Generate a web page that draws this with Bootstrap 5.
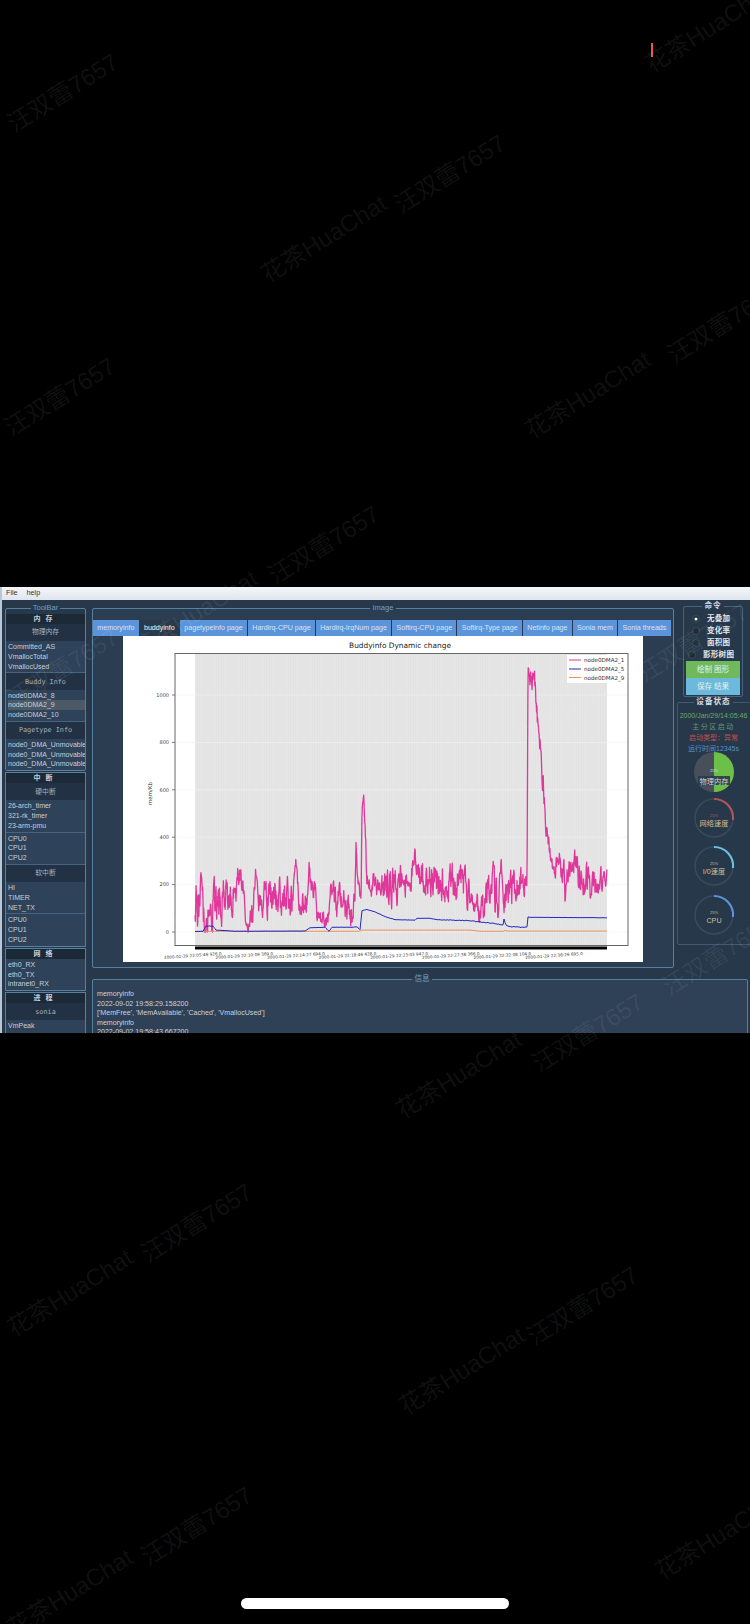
<!DOCTYPE html>
<html lang="zh-CN">
<head>
  <meta charset="UTF-8" />
  <title>ToolBar monitor</title>
  <link href="https://cdn.jsdelivr.net/npm/bootstrap@5.3.3/dist/css/bootstrap.min.css" rel="stylesheet">
  <style>
    html, body { background: #000; height: 1624px; overflow: hidden; }
    body { position: relative; font-family: "Liberation Sans", "Noto Sans CJK SC", sans-serif; font-size: 7px; }
    .red-tick { width: 2px; height: 14px; margin: 43px 0 0 651px; background: #e8574f; }
    .phone-bar { width: 268px; height: 11px; margin: 565px 0 0 241px; background: #fff; border-radius: 6px; }

    .app-win { height: 446px; margin-top: 530px; overflow: hidden; background: #26384a; border-left: 2px solid #b9c6d6; color: #c5d0db; }
    .menu-strip { height: 13px; flex: none; padding-left: 4px; gap: 9px; align-items: center; background: linear-gradient(#f4f6fb, #dfe5ee); color: #333; font-size: 7.2px; }

    .gbox { min-width: 0; border: 1px solid #55809f; border-radius: 2px; padding: 0; }
    .gbox > legend { float: none; width: auto; margin: 0 auto; padding: 0 2px; font-size: 7.6px; line-height: 8px; color: #6f9fc4; }

    .left-col { width: 81px; margin-left: 3px; flex: none; }
    .tool-box { margin-top: 4px; }
    .tool-box .band-row:first-of-type { margin-top: 2px; }
    .sect-box { border: 1px solid #55809f; margin-top: 1px; }
    .band-row { background: #1c2a38; color: #c9d0d7; font-weight: 700; text-align: center; letter-spacing: 5px; font-size: 7px; line-height: 10px; height: 10px; }
    .head-row { background: #223244; color: #a5b1bd; text-align: center; font-family: "DejaVu Sans Mono", "Noto Sans CJK SC", monospace; font-size: 6.8px; display: flex; align-items: center; justify-content: center; height: 17px; }
    .item-list { background: #2e4259; padding: 1px 0 1px 2px; border-bottom: 1px solid #46647f; border-radius: 0; }
    .item-list:last-child { border-bottom: 0; }
    .item-list .list-group-item { background: transparent; border: 0; padding: 0; line-height: 9.8px; font-size: 7px; color: #c5d0db; white-space: nowrap; overflow: hidden; }
    .item-list .list-group-item.active { background: #4c5967; color: #c5d0db; }

    .main-col { margin-left: 6px; min-width: 0; flex: 1; }
    .img-box { width: 582px; flex: none; margin-top: 4px; background: #2a3d51; }
    .tab-row { height: 16px; margin: 8px 2px 0 0; flex-wrap: nowrap; background: #26384a; }
    .tab-row .nav-link { height: 16px; padding: 0 4.3px; margin-right: 1px; background: #5b94da; color: #d8e6f6; font-size: 7.1px; line-height: 16px; white-space: nowrap; border-radius: 0; }
    .tab-row .nav-link.active { background: #283a4c; color: #f2f4f6; }
    .chart-wrap { width: 520px; height: 326px; margin: 0 auto 5px; background: #fff; }
    .chart-wrap svg { display: block; }

    .right-col { width: 73px; margin-left: 3px; flex: none; }
    .cmd-box { margin: 2px 7px 0 6px; border-color: #46647f; }
    .cmd-box > legend, .state-box > legend { color: #d6dce2; font-weight: 700; letter-spacing: 1px; }
    .radio-list { padding-top: 3px; }
    .radio-item { height: 12px; min-height: 12px; margin: 0; padding: 0 0 0 8px; color: #e4e8ec; font-weight: 700; font-size: 7.5px; letter-spacing: .3px; }
    .radio-item.wide { padding-left: 4px; }
    .radio-item label { margin-left: 7px; }
    .radio-item .form-check-input { float: none; flex: none; width: 8px; height: 8px; margin: 0; background-color: #1e2b38; border-color: #3d4c5b; }
    .radio-item .form-check-input:checked { background-color: #1e2b38; border-color: #3d4c5b; }
    .act-btn { display: block; width: 54px; height: 17px; margin: 0 auto; padding: 0; border: 0; border-radius: 0; font-size: 7.5px; line-height: 17px; color: #e8f0e8; }
    .act-btn.is-draw { background: #6fb95c; }
    .act-btn.is-save { background: #6bb9dc; margin-bottom: 1px; }
    .state-box { margin: 1px -4px 0 0; padding-right: 4px; border-color: #3e5a74; }
    .state-lines { padding-top: 4px; text-align: center; }
    .state-lines div { line-height: 11px; font-size: 7px; white-space: nowrap; }
    .c-green { color: #6aa86a; }
    .c-dim { color: #5f9a78; letter-spacing: 1.5px; }
    .c-red { color: #c2504e; }
    .c-blue { color: #5b8fc4; }
    .gauge-col { padding-bottom: 6px; }
    .gauge-col svg { display: block; margin: 0 auto; }
    .gauge-col svg + svg { margin-top: 2.3px; }
    .gauge-col .first-g { margin-top: -2px; margin-bottom: 3px; }

    .msg-box { margin: 7px 2px 0 0; padding: 7px 0 0 4px; background: #2e4157; }
    .msg-box > legend { color: #6f9fc4; }
    .msg-box p { margin: 0; line-height: 9.5px; font-size: 7.1px; color: #c8d2dc; white-space: nowrap; }

    .wm-layer { position: absolute; inset: 0; overflow: hidden; pointer-events: none; }
    .wm-text { position: absolute; transform: translate(-50%, -50%) rotate(-32deg); font-family: "Liberation Sans", "Noto Sans CJK SC", sans-serif; font-size: 24px; color: rgba(255,255,255,.07); white-space: nowrap; }
  </style>
</head>
<body>
  <div class="red-tick"></div>

  <div class="app-win d-flex flex-column">
    <div class="menu-strip d-flex"><span>File</span><span>help</span></div>

    <div class="d-flex flex-grow-1">
      <!-- ToolBar -->
      <div class="left-col">
        <fieldset class="gbox tool-box">
          <legend>ToolBar</legend>
          <div class="band-row">内存</div>
          <div class="head-row">物理内存</div>
          <ul class="list-group item-list">
            <li class="list-group-item">Committed_AS</li>
            <li class="list-group-item">VmallocTotal</li>
            <li class="list-group-item">VmallocUsed</li>
          </ul>
          <div class="head-row">Buddy Info</div>
          <ul class="list-group item-list">
            <li class="list-group-item">node0DMA2_8</li>
            <li class="list-group-item active">node0DMA2_9</li>
            <li class="list-group-item">node0DMA2_10</li>
          </ul>
          <div class="head-row">Pagetype Info</div>
          <ul class="list-group item-list">
            <li class="list-group-item">node0_DMA_Unmovable</li>
            <li class="list-group-item">node0_DMA_Unmovable</li>
            <li class="list-group-item">node0_DMA_Unmovable</li>
          </ul>
        </fieldset>
        <div class="sect-box">
          <div class="band-row">中断</div>
          <div class="head-row">硬中断</div>
          <ul class="list-group item-list">
            <li class="list-group-item">26-arch_timer</li>
            <li class="list-group-item">321-rk_timer</li>
            <li class="list-group-item">23-arm-pmu</li>
          </ul>
          <ul class="list-group item-list">
            <li class="list-group-item">CPU0</li>
            <li class="list-group-item">CPU1</li>
            <li class="list-group-item">CPU2</li>
          </ul>
          <div class="head-row">软中断</div>
          <ul class="list-group item-list">
            <li class="list-group-item">HI</li>
            <li class="list-group-item">TIMER</li>
            <li class="list-group-item">NET_TX</li>
          </ul>
          <ul class="list-group item-list">
            <li class="list-group-item">CPU0</li>
            <li class="list-group-item">CPU1</li>
            <li class="list-group-item">CPU2</li>
          </ul>
        </div>
        <div class="sect-box">
          <div class="band-row">网络</div>
          <ul class="list-group item-list">
            <li class="list-group-item">eth0_RX</li>
            <li class="list-group-item">eth0_TX</li>
            <li class="list-group-item">intranet0_RX</li>
          </ul>
        </div>
        <div class="sect-box">
          <div class="band-row">进程</div>
          <div class="head-row">sonia</div>
          <ul class="list-group item-list">
            <li class="list-group-item">VmPeak</li>
            <li class="list-group-item">VmSize</li>
          </ul>
        </div>
      </div>

      <div class="main-col d-flex flex-column">
        <div class="d-flex">
          <!-- Image -->
          <fieldset class="gbox img-box">
            <legend>Image</legend>
            <ul class="nav tab-row">
              <li class="nav-item"><a class="nav-link" href="#">memoryinfo</a></li>
              <li class="nav-item"><a class="nav-link active" href="#">buddyinfo</a></li>
              <li class="nav-item"><a class="nav-link" href="#">pagetypeinfo page</a></li>
              <li class="nav-item"><a class="nav-link" href="#">Hardirq-CPU page</a></li>
              <li class="nav-item"><a class="nav-link" href="#">Hardirq-IrqNum page</a></li>
              <li class="nav-item"><a class="nav-link" href="#">Softirq-CPU page</a></li>
              <li class="nav-item"><a class="nav-link" href="#">Softirq-Type page</a></li>
              <li class="nav-item"><a class="nav-link" href="#">Netinfo page</a></li>
              <li class="nav-item"><a class="nav-link" href="#">Sonia mem</a></li>
              <li class="nav-item"><a class="nav-link" href="#">Sonia threads</a></li>
            </ul>
            <div class="chart-wrap">
              <svg id="chart" width="520" height="326" viewBox="123 636 520 326" font-family="DejaVu Sans, sans-serif">
                <defs>
                  <pattern id="stripes" width="2.4" height="4" patternUnits="userSpaceOnUse">
                    <rect width="2.4" height="4" fill="#e6e6e6"/>
                    <rect width="0.8" height="4" fill="#e1e1e1"/>
                  </pattern>
                </defs>
                <text x="400" y="648" text-anchor="middle" font-size="7.4" fill="#222">Buddyinfo Dynamic change</text>
                <rect x="195" y="654" width="412" height="291" fill="url(#stripes)"/>
                <g id="grid-y"></g>
                <path id="line-pink" fill="none" stroke="#e0379a" stroke-width="1.3" stroke-linejoin="round"/>
                <path id="line-orange" fill="none" stroke="#e8935f" stroke-width="1"/>
                <path id="line-blue" fill="none" stroke="#2626c4" stroke-width="1"/>
                <rect x="175" y="653.5" width="453" height="292" fill="none" stroke="#666" stroke-width="1"/>
                <rect x="195" y="946.5" width="412" height="3" fill="#000"/>
                <text transform="translate(152 805) rotate(-90)" font-size="5.5" fill="#333">mem/Kb</text>
                <g id="ticks-x" font-size="4.2" fill="#444"></g>
                <g>
                  <rect x="567" y="655" width="58" height="28" fill="#fff" opacity=".9"/>
                  <line x1="569" x2="581" y1="660" y2="660" stroke="#e0379a"/>
                  <line x1="569" x2="581" y1="669" y2="669" stroke="#2626c4"/>
                  <line x1="569" x2="581" y1="677.5" y2="677.5" stroke="#e8935f"/>
                  <g font-size="5.6" fill="#333">
                    <text x="584" y="662">node0DMA2_1</text>
                    <text x="584" y="671">node0DMA2_5</text>
                    <text x="584" y="679.5">node0DMA2_9</text>
                  </g>
                </g>
              </svg>
            </div>
          </fieldset>

          <div class="right-col">
            <fieldset class="gbox cmd-box">
              <legend>命令</legend>
              <div class="radio-list">
                <div class="form-check radio-item d-flex align-items-center"><input class="form-check-input" type="radio" name="mode" checked><label>无叠加</label></div>
                <div class="form-check radio-item d-flex align-items-center"><input class="form-check-input" type="radio" name="mode"><label>变化率</label></div>
                <div class="form-check radio-item d-flex align-items-center"><input class="form-check-input" type="radio" name="mode"><label>面积图</label></div>
                <div class="form-check radio-item wide d-flex align-items-center"><input class="form-check-input" type="radio" name="mode"><label>影形树图</label></div>
              </div>
              <button class="btn act-btn is-draw">绘制 图形</button>
              <button class="btn act-btn is-save">保存 结果</button>
            </fieldset>

            <fieldset class="gbox state-box">
              <legend>设备状态</legend>
              <div class="state-lines">
                <div class="c-green">2000/Jan/29/14:05:46</div>
                <div class="c-dim">主分区启动</div>
                <div class="c-red">启动类型：异常</div>
                <div class="c-blue">运行时间12345s</div>
              </div>
              <div class="gauge-col">
                <svg class="first-g" width="44" height="40" viewBox="0 0 44 40">
                  <circle cx="22" cy="20" r="20" fill="#474f5a"/>
                  <path d="M22 0 A20 20 0 0 1 22 40 Z" fill="#6cc04a"/>
                  <text x="22" y="20" text-anchor="middle" font-size="4" fill="#d8dde2">25%</text>
                  <rect x="6" y="24" width="32" height="9" fill="#2a3a4a" opacity=".9"/>
                  <text x="22" y="31.5" text-anchor="middle" font-size="7.2" fill="#d0d6dc">物理内存</text>
                </svg>
                <svg width="44" height="46" viewBox="0 0 44 46">
                  <circle cx="22" cy="23" r="19" fill="none" stroke="#3b4a5a" stroke-width="1.6"/>
                  <path d="M22 4 A19 19 0 0 1 41 25" fill="none" stroke="#b5545c" stroke-width="2"/>
                  <text x="22" y="22" text-anchor="middle" font-size="4" fill="#c2504e">25%</text>
                  <text x="22" y="31" text-anchor="middle" font-size="7.2" fill="#d6bd94">网络速度</text>
                </svg>
                <svg width="44" height="46" viewBox="0 0 44 46">
                  <circle cx="22" cy="23" r="19" fill="none" stroke="#3b4a5a" stroke-width="1.6"/>
                  <path d="M22 4 A19 19 0 0 1 41 25" fill="none" stroke="#6cc0dc" stroke-width="2"/>
                  <text x="22" y="22" text-anchor="middle" font-size="4" fill="#d6bd94">25%</text>
                  <text x="22" y="31" text-anchor="middle" font-size="7.2" fill="#d6bd94">I/0速度</text>
                </svg>
                <svg width="44" height="46" viewBox="0 0 44 46">
                  <circle cx="22" cy="23" r="19" fill="none" stroke="#3b4a5a" stroke-width="1.6"/>
                  <path d="M22 4 A19 19 0 0 1 41 25" fill="none" stroke="#5b94da" stroke-width="2"/>
                  <text x="22" y="22" text-anchor="middle" font-size="4" fill="#d6bd94">25%</text>
                  <text x="22" y="31" text-anchor="middle" font-size="7.2" fill="#d6bd94">CPU</text>
                </svg>
              </div>
            </fieldset>
          </div>
        </div>

        <fieldset class="gbox msg-box">
          <legend>信息</legend>
          <p>memoryinfo</p>
          <p>2022-09-02 19:58:29.158200</p>
          <p>['MemFree', 'MemAvailable', 'Cached', 'VmallocUsed']</p>
          <p>memoryinfo</p>
          <p>2022-09-02 19:58:43.667200</p>
        </fieldset>
      </div>
    </div>
  </div>

  <div class="phone-bar"></div>
  <div class="wm-layer" id="wm"></div>

  <script>
    const NS = "http://www.w3.org/2000/svg";
    const ZERO_Y = 932, PX_PER_UNIT = 47.4 / 200;

    // small seeded generator so the plot is the same on every load
    let seed = 7657;
    function rnd() {
      seed = (seed * 16807) % 2147483647;
      return seed / 2147483647;
    }

    function lerp(points, x) {
      for (let i = 1; i < points.length; i++) {
        if (x <= points[i][0]) {
          const a = points[i - 1], b = points[i];
          const t = (x - a[0]) / (b[0] - a[0] || 1);
          return a.slice(1).map((v, k) => v + (b[k + 1] - v) * t);
        }
      }
      return points[points.length - 1].slice(1);
    }

    // x in page px, mean value, noise size
    const pinkShape = [
      [195,150,70],[198,120,70],[205,90,60],[212,100,70],[216,90,60],[225,150,60],[235,190,50],[241,240,25],
      [244,180,40],[246,15,10],[250,60,30],[254,120,50],[256,250,20],[259,140,40],[275,140,50],[292,130,50],
      [296,270,25],[300,130,40],[308,160,40],[309,320,15],[311,170,30],[315,180,25],[317,45,20],[328,50,25],
      [331,180,25],[336,110,50],[345,110,40],[352,70,35],[355,130,30],[356,380,10],[358,190,30],[361,170,40],
      [362,500,30],[364,540,20],[366,320,40],[368,200,30],[385,210,50],[410,220,50],[415,340,15],[418,230,40],
      [440,210,50],[465,200,50],[472,100,30],[478,110,40],[482,100,30],[490,190,60],[499,130,50],[501,300,15],
      [504,120,40],[510,190,60],[526,200,40],[527,190,20],[528,1120,5],[531,1060,30],[535,1040,40],[540,800,40],
      [545,520,40],[550,330,25],[554,260,25],[556,280,30],[564,290,40],[565,125,5],[567,270,30],[575,270,40],
      [590,190,45],[600,210,40],[607,240,20]
    ];
    const blueShape = [
      [195,2],[203,3],[206,25],[213,25],[216,8],[225,6],[235,3],[305,4],[310,18],[325,20],[329,3],[332,20],[352,20],
      [357,22],[360,10],[362,90],[367,95],[375,85],[385,65],[395,52],[415,50],[417,58],[430,58],[437,52],[470,48],
      [480,42],[495,35],[503,30],[504,55],[506,28],[510,22],[527,20],[528,62],[607,60]
    ];
    const orangeShape = [[195,3],[360,3],[362,8],[470,8],[480,3],[503,3],[505,6],[507,4],[607,4]];

    function toY(v) { return (ZERO_Y - v * PX_PER_UNIT).toFixed(1); }

    let d = "", smooth = 0;
    for (let x = 195; x <= 607; x += 0.35) {
      const [mean, amp] = lerp(pinkShape, x);
      smooth = smooth * 0.55 + (rnd() - 0.5) * 2.6;
      const v = Math.max(0, mean + amp * smooth);
      d += (d ? "L" : "M") + x.toFixed(2) + " " + toY(v);
    }
    document.getElementById("line-pink").setAttribute("d", d);

    d = "";
    for (let x = 195; x <= 607; x += 1) {
      const n = x > 440 && x < 530 ? (rnd() - 0.5) * 4 : (rnd() - 0.5) * 1;
      d += (d ? "L" : "M") + x + " " + toY(Math.max(0, lerp(blueShape, x)[0] + n));
    }
    document.getElementById("line-blue").setAttribute("d", d);

    d = "";
    for (let x = 195; x <= 607; x += 2) d += (d ? "L" : "M") + x + " " + toY(lerp(orangeShape, x)[0]);
    document.getElementById("line-orange").setAttribute("d", d);

    // y axis
    const gridY = document.getElementById("grid-y");
    [0, 200, 400, 600, 800, 1000].forEach(v => {
      const y = toY(v);
      const tick = document.createElementNS(NS, "line");
      tick.setAttribute("x1", 172); tick.setAttribute("x2", 175);
      tick.setAttribute("y1", y); tick.setAttribute("y2", y);
      tick.setAttribute("stroke", "#444"); tick.setAttribute("stroke-width", ".7");
      gridY.appendChild(tick);
      const grid = document.createElementNS(NS, "line");
      grid.setAttribute("x1", 175); grid.setAttribute("x2", 628);
      grid.setAttribute("y1", y); grid.setAttribute("y2", y);
      grid.setAttribute("stroke", "#f1f1f1"); grid.setAttribute("stroke-width", ".6");
      gridY.appendChild(grid);
      const label = document.createElementNS(NS, "text");
      label.setAttribute("x", 169); label.setAttribute("y", +y + 1.8);
      label.setAttribute("text-anchor", "end");
      label.setAttribute("font-size", "5");
      label.setAttribute("fill", "#444");
      label.textContent = v;
      gridY.appendChild(label);
    });

    // x axis
    const ticksX = document.getElementById("ticks-x");
    ["22:05:46 926.0", "22:10:09 369.0", "22:14:27 694.0", "22:18:46 428.0", "22:23:03 947.0", "22:27:38 366.0", "22:32:08 104.0", "22:36:26 695.0"].forEach((t, i) => {
      const label = document.createElementNS(NS, "text");
      const x = 164 + i * 51.6;
      label.setAttribute("transform", `translate(${x} 959) rotate(-4)`);
      label.textContent = "2000-01-29 " + t;
      ticksX.appendChild(label);
    });

    // watermark tiled over the whole shot
    const A = "汪双蕾7657", B = "花茶HuaChat";
    const marks = [
      [A,60,90],[B,705,26],[A,447,171],[B,321,236],[A,720,321],[B,585,392],[A,57,394],[A,321,542],[B,192,611],
      [A,690,640],[A,60,665],[B,580,700],[A,321,839],[B,197,901],[A,715,953],[A,585,1030],[B,456,1072],
      [A,194,1220],[B,67,1290],[A,580,1303],[B,459,1368],[A,194,1523],[B,67,1590],[B,715,1533]
    ];
    const wm = document.getElementById("wm");
    marks.forEach(([text, x, y]) => {
      const el = document.createElement("span");
      el.className = "wm-text";
      el.style.left = (x + 3) + "px";
      el.style.top = (y + 3) + "px";
      el.textContent = text;
      wm.appendChild(el);
    });
  </script>
  <script src="https://cdn.jsdelivr.net/npm/bootstrap@5.3.3/dist/js/bootstrap.bundle.min.js"></script>
</body>
</html>
